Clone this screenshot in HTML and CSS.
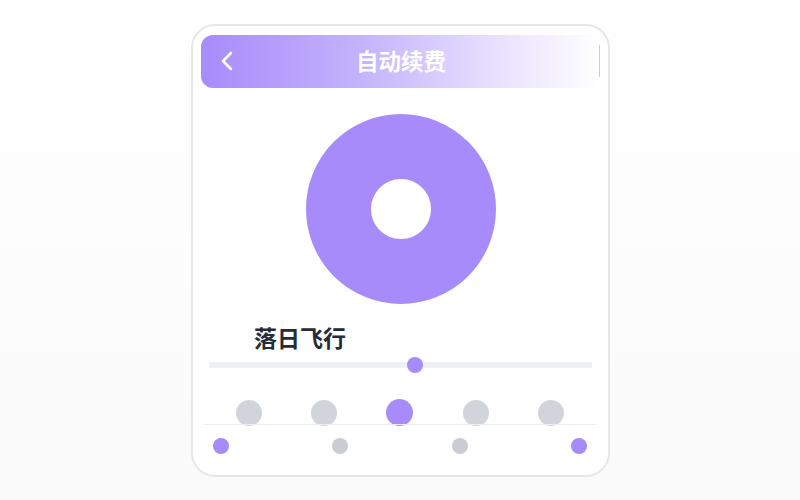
FILE: index.html
```html
<!DOCTYPE html>
<html lang="zh">
<head>
<meta charset="utf-8">
<title>自动续费</title>
<link rel="stylesheet" href="styles.css">
</head>
<body>
<div class="card">
  <div class="header">
    <svg class="back" width="14" height="22" viewBox="0 0 14 22"><polyline points="11,3 3,11 11,19" fill="none" stroke="#fff" stroke-width="2.6" stroke-linecap="round" stroke-linejoin="round"/></svg>
    <div class="title">自动续费</div>
    <div class="edge"></div>
  </div>
  <div class="disc"></div>
  <div class="song">落日飞行</div>
  <div class="slider">
    <div class="track"></div>
    <div class="thumb" style="left: 198px"></div>
  </div>
  <div class="dots">
    <span class="dot"></span>
    <span class="dot"></span>
    <span class="dot active"></span>
    <span class="dot"></span>
    <span class="dot"></span>
  </div>
  <div class="sep"></div>
  <div class="minis">
    <span class="mini on"></span>
    <span class="mini"></span>
    <span class="mini"></span>
    <span class="mini on"></span>
  </div>
</div>
</body>
</html>
```
FILE: styles.css
```css
html, body {
  margin: 0;
  padding: 0;
}
body {
  width: 800px;
  height: 500px;
  overflow: hidden;
  background: linear-gradient(#ffffff, #fafafb);
  font-family: "Noto Sans CJK SC", "Noto Sans", sans-serif;
}
.card {
  box-sizing: border-box;
  width: 419px;
  height: 453px;
  margin: 24px 0 0 191px;
  border: 2px solid #e6e7eb;
  border-radius: 24px;
  background: #fff;
  padding-top: 9px;
  display: flex;
  flex-direction: column;
}
.header {
  position: relative;
  height: 53px;
  margin: 0 7px 0 8px;
  border-radius: 12px;
  background: linear-gradient(to right, #a78bfa 0%, #c4b3fc 40%, #e9e2fe 75%, #ffffff 100%);
  display: flex;
  align-items: center;
  justify-content: center;
}
.back {
  position: absolute;
  left: 19px;
  top: 15px;
}
.title {
  color: #fff;
  font-size: 22.5px;
  font-weight: 700;
  line-height: 28px;
  margin-top: -4px;
}
.edge {
  position: absolute;
  right: 1px;
  top: 10px;
  width: 1px;
  height: 32px;
  background: #cfc4f5;
}
.disc {
  align-self: center;
  width: 60px;
  height: 60px;
  border: 65px solid #a78bfa;
  border-radius: 50%;
  margin-top: 26px;
}
.song {
  margin-top: 18px;
  padding-left: 61px;
  font-size: 23px;
  line-height: 30px;
  font-weight: 700;
  color: #262c35;
}
.slider {
  position: relative;
  height: 16px;
  margin: 5px 16px 0 16px;
  display: flex;
  align-items: center;
}
.track {
  flex: 1;
  height: 6px;
  background: #edf0f4;
}
.thumb {
  position: absolute;
  top: 0;
  width: 16px;
  height: 16px;
  border-radius: 50%;
  background: #a78bfa;
}
.dots {
  height: 24px;
  margin: 27px 19px 0 18px;
  display: flex;
  justify-content: space-around;
  align-items: flex-start;
}
.dot {
  width: 26px;
  height: 26px;
  border-radius: 50%;
  background: #d1d5db;
}
.dot.active {
  width: 27px;
  height: 27px;
  margin-top: -1px;
  background: #a78bfa;
}
.sep {
  position: relative;
  height: 1px;
  margin: 0 11px 0 10px;
  background: #eceef2;
}
.minis {
  margin: 13px 21px 0 20px;
  display: flex;
  justify-content: space-between;
}
.mini {
  width: 16px;
  height: 16px;
  border-radius: 50%;
  background: #c9cdd3;
}
.mini.on {
  background: #a78bfa;
}
```
